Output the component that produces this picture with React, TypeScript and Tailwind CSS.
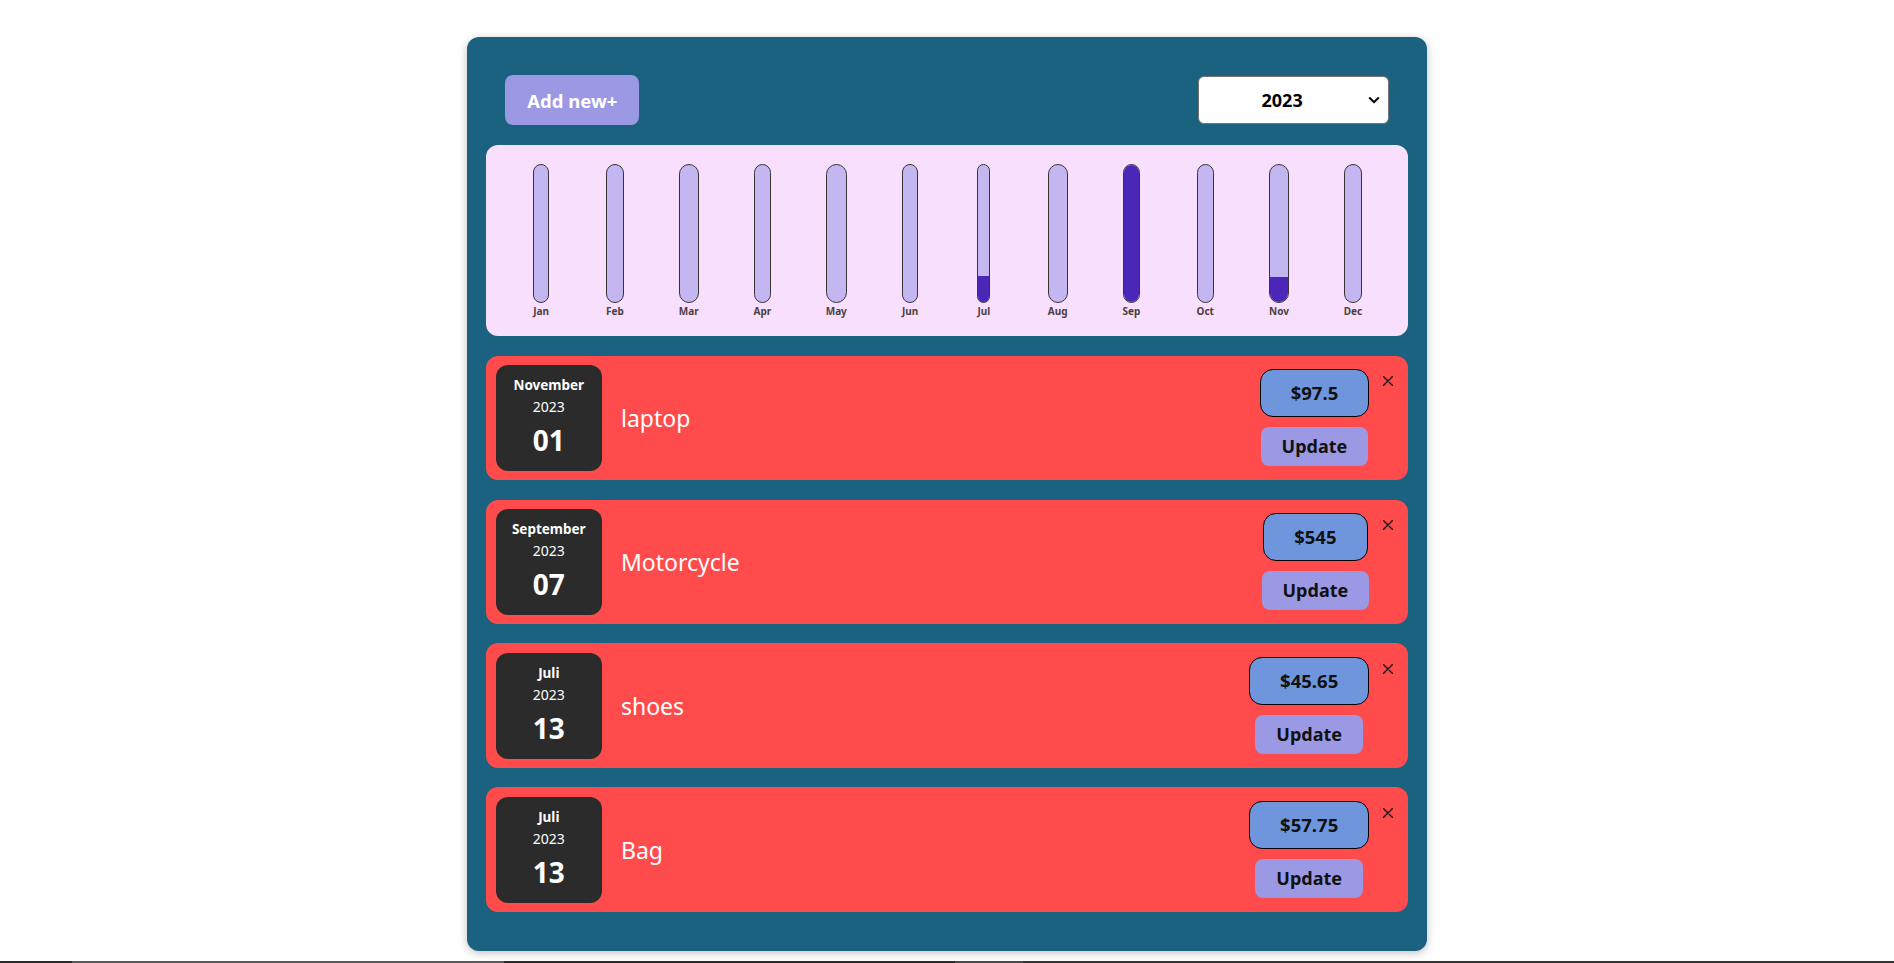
import React from "react";

type Expense = {
  month: string;
  year: number;
  day: string;
  title: string;
  price: string;
  monthIdx: number;
  amount: number;
};

const expenses: Expense[] = [
  { month: "November", year: 2023, day: "01", title: "laptop", price: "$97.5", monthIdx: 10, amount: 97.5 },
  { month: "September", year: 2023, day: "07", title: "Motorcycle", price: "$545", monthIdx: 8, amount: 545 },
  { month: "Juli", year: 2023, day: "13", title: "shoes", price: "$45.65", monthIdx: 6, amount: 45.65 },
  { month: "Juli", year: 2023, day: "13", title: "Bag", price: "$57.75", monthIdx: 6, amount: 57.75 },
];

const months = ["Jan", "Feb", "Mar", "Apr", "May", "Jun", "Jul", "Aug", "Sep", "Oct", "Nov", "Dec"];

const font = { fontFamily: '"Noto Sans", "Open Sans", Arial, sans-serif' };

function Chart() {
  const totals = months.map((_, i) =>
    expenses.filter((e) => e.monthIdx === i).reduce((s, e) => s + e.amount, 0)
  );
  const max = Math.max(...totals);
  return (
    <div className="flex rounded-[12px] bg-[#f8dffe] px-[18px] pt-[19.2px] pb-[19.2px]">
      {months.map((m, i) => (
        <div key={m} className="flex flex-1 justify-center">
          <div className="inline-flex flex-col items-stretch">
            <div className="flex h-[139px] flex-col justify-end overflow-hidden rounded-full border border-[#3a3535] bg-[#c4b7f1]">
              <div
                className="w-full bg-[#4a27b8]"
                style={{ height: `${max > 0 ? (totals[i] / max) * 100 : 0}%` }}
              />
            </div>
            <div className="mt-[2px] text-center text-[10px] font-bold leading-[12.4px] text-[#4a4040]">
              {m}
            </div>
          </div>
        </div>
      ))}
    </div>
  );
}

function CloseIcon() {
  return (
    <svg width="10" height="10" viewBox="0 0 10 10" className="block">
      <path d="M0.7 0.7L9.3 9.3M9.3 0.7L0.7 9.3" stroke="#111" strokeWidth="1.4" strokeLinecap="round" />
    </svg>
  );
}

function ExpenseCard({ e }: { e: Expense }) {
  return (
    <div className="flex items-center rounded-[12px] bg-[#ff4b4b] p-[9.6px]">
      <div className="flex h-[105.6px] w-[106px] flex-col items-center rounded-[12px] bg-[#2b2b2b] pt-[10px] text-white">
        <div className="text-[13.5px] font-bold leading-[21px]">{e.month}</div>
        <div className="text-[14px] leading-[21px]">{e.year}</div>
        <div className="text-[28px] font-bold leading-[47px]">{e.day}</div>
      </div>
      <div className="ml-[19.2px] flex-1 text-[23px] text-white">{e.title}</div>
      <div className="flex flex-col items-center">
        <div className="rounded-[13px] border border-black bg-[#6f96dc] px-[30px] py-[11px] text-[18.5px] font-bold leading-[24px] text-[#111]">
          {e.price}
        </div>
        <div className="mt-[10px] flex h-[39px] items-center rounded-[8px] bg-[#9b98e4] px-[21px] text-[18px] font-bold text-[#111]">
          Update
        </div>
      </div>
      <div className="mt-[1px] ml-[14px] mr-[5px] self-start pt-[10px]">
        <CloseIcon />
      </div>
    </div>
  );
}

export default function App() {
  return (
    <div className="flex h-screen flex-col overflow-hidden bg-white" style={font}>
      <div className="mx-auto mt-[37px] w-[960px] rounded-[12px] bg-[#1b6180] px-[19.2px] pt-[19.2px] pb-[38.4px] shadow-[0_2px_8px_rgba(0,0,0,0.25)]">
        <div className="flex items-center justify-between p-[19.2px]">
          <div className="flex h-[50px] w-[134px] items-center justify-center rounded-[8px] bg-[#9b98e4] text-[18.5px] font-bold text-white">
            Add new+
          </div>
          <div className="flex h-[48px] w-[191px] items-center rounded-[6px] border border-[#767676] bg-white">
            <span className="w-[167px] text-center text-[18px] font-bold text-black">2023</span>
            <svg width="12" height="8" viewBox="0 0 12 8" className="ml-[2px]">
              <path d="M1.2 1.5L6 6.2L10.8 1.5" fill="none" stroke="#000" strokeWidth="2" />
            </svg>
          </div>
        </div>
        <Chart />
        <div className="mt-[19.2px] flex flex-col gap-[19.2px]">
          {expenses.map((e, i) => (
            <ExpenseCard key={i} e={e} />
          ))}
        </div>
      </div>
      <div className="flex-1" />
      <div className="flex h-[2px] w-full">
        <div className="w-[72px] bg-[#2b2b2b]" />
        <div className="w-[432px] bg-[#5a5a5a]" />
        <div className="w-[451px] bg-[#2b2b2b]" />
        <div className="w-[68px] bg-[#4a4a4a]" />
        <div className="flex-1 bg-[#333]" />
      </div>
    </div>
  );
}
